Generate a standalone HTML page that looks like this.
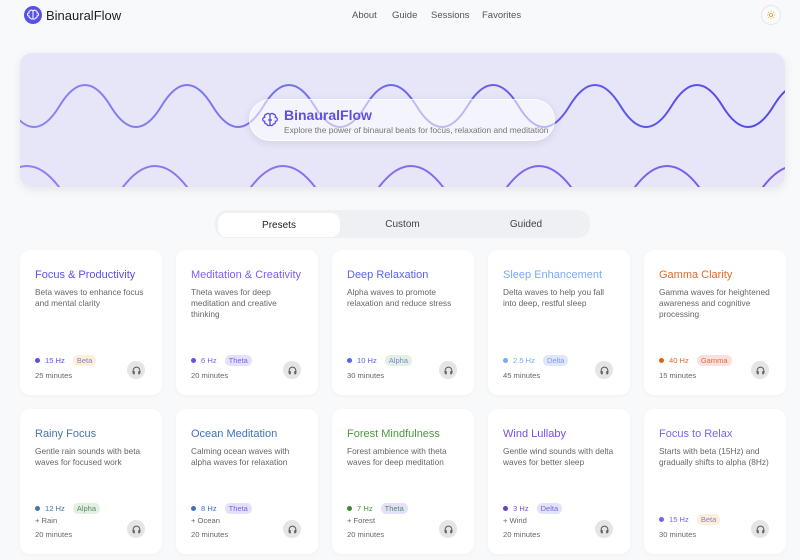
<!DOCTYPE html>
<html><head><meta charset="utf-8"><style>
*{box-sizing:border-box;margin:0;padding:0}
body{width:800px;height:560px;overflow:hidden;background:#f8f9fb;font-family:"Liberation Sans",sans-serif;position:relative;color:#333}
.abs{position:absolute}
.nav a{position:absolute;top:10px;font-size:9.5px;color:#555}
.hero{left:20px;top:53px;width:765px;height:134px;border-radius:12px;background:#e6e6f8;overflow:hidden;box-shadow:0 3px 10px rgba(0,0,0,.08)}
.pill{left:249px;top:99px;width:306px;height:42px;border-radius:21px;background:rgba(255,255,255,.55);box-shadow:0 2px 8px rgba(80,80,150,.15);border:1px solid rgba(255,255,255,.7)}
.tabs{left:215px;top:210px;width:375px;height:28px;border-radius:12px;background:#eef0f4}
.tab{position:absolute;top:0;height:28px;line-height:30px;font-size:10px;color:#444;text-align:center}
.card{position:absolute;width:142px;height:145px;background:#fff;border-radius:10px;box-shadow:0 1px 4px rgba(0,0,0,.04)}
.card h3{position:absolute;left:15px;top:19px;font-size:11px;font-weight:normal;white-space:nowrap}
.card p{position:absolute;left:15px;top:37px;width:114px;font-size:8.3px;line-height:11px;color:#666}
.hz{position:absolute;left:15px;font-size:7.6px;display:flex;align-items:center;white-space:nowrap}
.hz i{width:5px;height:5px;border-radius:50%;display:inline-block;margin-right:5px}
.tag{margin-left:8px;padding:1px 4px;border-radius:5px;font-size:7.5px}
.ex,.min{position:absolute;left:15px;font-size:7.6px;color:#666}
.hp{position:absolute;right:17px;width:18px;height:18px;border-radius:50%;background:#e5e5e5;display:flex;align-items:center;justify-content:center}
</style></head><body>
<div class="abs" style="left:24px;top:6px;width:18px;height:18px;border-radius:50%;background:#5b4fe9;display:flex;align-items:center;justify-content:center">
<svg width="12" height="12" viewBox="0 0 24 24" fill="none" stroke="#fff" stroke-width="2"><path d="M12 5a3 3 0 0 0-5.5-1.5A3 3 0 0 0 4 8a3 3 0 0 0 0 6 3 3 0 0 0 3 4 3 3 0 0 0 5 1.5V5z"/><path d="M12 5a3 3 0 0 1 5.5-1.5A3 3 0 0 1 20 8a3 3 0 0 1 0 6 3 3 0 0 1-3 4 3 3 0 0 1-5 1.5"/></svg></div>
<div class="abs" style="left:46px;top:8px;font-size:13px;color:#222">BinauralFlow</div>
<div class="nav"><a style="left:352px">About</a><a style="left:392px">Guide</a><a style="left:431px">Sessions</a><a style="left:482px">Favorites</a></div>
<div class="abs" style="left:761px;top:5px;width:20px;height:20px;border-radius:50%;border:1px solid #e6e6ec;background:#fafafa;display:flex;align-items:center;justify-content:center">
<svg width="10" height="10" viewBox="0 0 24 24" fill="none" stroke="#e0a53a" stroke-width="2.2"><circle cx="12" cy="12" r="4"/><path d="M12 2v2M12 20v2M2 12h2M20 12h2M4.9 4.9l1.4 1.4M17.7 17.7l1.4 1.4M4.9 19.1l1.4-1.4M17.7 6.3l1.4-1.4"/></svg></div>
<div class="abs hero">
<svg width="765" height="134" viewBox="20 53 765 134">
<defs><linearGradient id="g1" x1="0" x2="1"><stop offset="0" stop-color="#8e8af0"/><stop offset="1" stop-color="#4b43e6"/></linearGradient>
<linearGradient id="g2" x1="0" x2="1"><stop offset="0" stop-color="#9b86ef"/><stop offset="1" stop-color="#7556e6"/></linearGradient></defs>
<path fill="none" stroke="url(#g1)" stroke-width="2" d="M -42.5 106 Q -17 64 8.5 106 T 59.5 106 T 110.5 106 T 161.5 106 T 212.5 106 T 263.5 106 T 314.5 106 T 365.5 106 T 416.5 106 T 467.5 106 T 518.5 106 T 569.5 106 T 620.5 106 T 671.5 106 T 722.5 106 T 773.5 106 T 824.5 106 T 875.5 106"/>
<path fill="none" stroke="url(#g2)" stroke-width="2" d="M -133 187 Q -101 145 -69 187 T -5 187 T 59 187 T 123 187 T 187 187 T 251 187 T 315 187 T 379 187 T 443 187 T 507 187 T 571 187 T 635 187 T 699 187 T 763 187 T 827 187 T 891 187"/>
</svg></div>
<div class="abs pill"></div>
<svg class="abs" style="left:262px;top:112px" width="16" height="16" viewBox="0 0 24 24" fill="none" stroke="#5b4fe9" stroke-width="2"><path d="M12 5a3 3 0 0 0-5.5-1.5A3 3 0 0 0 4 8a3 3 0 0 0 0 6 3 3 0 0 0 3 4 3 3 0 0 0 5 1.5V5z"/><path d="M12 5a3 3 0 0 1 5.5-1.5A3 3 0 0 1 20 8a3 3 0 0 1 0 6 3 3 0 0 1-3 4 3 3 0 0 1-5 1.5"/><path d="M9 12h6"/></svg>
<div class="abs" style="left:284px;top:107px;font-size:14px;font-weight:bold;color:#5b4fe9">BinauralFlow</div>
<div class="abs" style="left:284px;top:125px;font-size:8.4px;color:#777;white-space:nowrap">Explore the power of binaural beats for focus, relaxation and meditation</div>
<div class="abs tabs"><div class="tab" style="left:3px;top:3px;height:24px;line-height:26px;width:122px;background:#fff;border-radius:9px;color:#222">Presets</div><div class="tab" style="left:125px;width:125px">Custom</div><div class="tab" style="left:250px;width:122px">Guided</div></div>

<div class="card" style="left:20px;top:250px"><h3 style="color:#5b4fe9">Focus &amp; Productivity</h3><p>Beta waves to enhance focus and mental clarity</p>
<div class="hz" style="top:105px;color:#5b4fe9"><i style="background:#5b4fe9"></i>15 Hz<span class="tag" style="background:#fbefd6;color:#8a7cd8">Beta</span></div><div class="min" style="top:121px">25 minutes</div><div class="hp" style="top:111px"><svg width="9" height="9" viewBox="0 0 24 24" fill="none" stroke="#555" stroke-width="2.5"><path d="M3 18v-6a9 9 0 0 1 18 0v6"/><path d="M21 19a2 2 0 0 1-2 2h-1v-6h3zM3 19a2 2 0 0 0 2 2h1v-6H3z"/></svg></div></div>
<div class="card" style="left:176px;top:250px"><h3 style="color:#7b5ff0">Meditation &amp; Creativity</h3><p>Theta waves for deep meditation and creative thinking</p>
<div class="hz" style="top:105px;color:#7b5ff0"><i style="background:#6a4fe6"></i>6 Hz<span class="tag" style="background:#e3e1fb;color:#7b5ff0">Theta</span></div><div class="min" style="top:121px">20 minutes</div><div class="hp" style="top:111px"><svg width="9" height="9" viewBox="0 0 24 24" fill="none" stroke="#555" stroke-width="2.5"><path d="M3 18v-6a9 9 0 0 1 18 0v6"/><path d="M21 19a2 2 0 0 1-2 2h-1v-6h3zM3 19a2 2 0 0 0 2 2h1v-6H3z"/></svg></div></div>
<div class="card" style="left:332px;top:250px"><h3 style="color:#5a62f0">Deep Relaxation</h3><p>Alpha waves to promote relaxation and reduce stress</p>
<div class="hz" style="top:105px;color:#5a62f0"><i style="background:#5a62f0"></i>10 Hz<span class="tag" style="background:#e3f1e3;color:#7a86d8">Alpha</span></div><div class="min" style="top:121px">30 minutes</div><div class="hp" style="top:111px"><svg width="9" height="9" viewBox="0 0 24 24" fill="none" stroke="#555" stroke-width="2.5"><path d="M3 18v-6a9 9 0 0 1 18 0v6"/><path d="M21 19a2 2 0 0 1-2 2h-1v-6h3zM3 19a2 2 0 0 0 2 2h1v-6H3z"/></svg></div></div>
<div class="card" style="left:488px;top:250px"><h3 style="color:#78aaf5">Sleep Enhancement</h3><p>Delta waves to help you fall into deep, restful sleep</p>
<div class="hz" style="top:105px;color:#78aaf5"><i style="background:#78aaf5"></i>2.5 Hz<span class="tag" style="background:#e1e7fb;color:#7a9be8">Delta</span></div><div class="min" style="top:121px">45 minutes</div><div class="hp" style="top:111px"><svg width="9" height="9" viewBox="0 0 24 24" fill="none" stroke="#555" stroke-width="2.5"><path d="M3 18v-6a9 9 0 0 1 18 0v6"/><path d="M21 19a2 2 0 0 1-2 2h-1v-6h3zM3 19a2 2 0 0 0 2 2h1v-6H3z"/></svg></div></div>
<div class="card" style="left:644px;top:250px"><h3 style="color:#e06a2c">Gamma Clarity</h3><p>Gamma waves for heightened awareness and cognitive processing</p>
<div class="hz" style="top:105px;color:#e06a2c"><i style="background:#e0601c"></i>40 Hz<span class="tag" style="background:#fbe1dc;color:#e06a4c">Gamma</span></div><div class="min" style="top:121px">15 minutes</div><div class="hp" style="top:111px"><svg width="9" height="9" viewBox="0 0 24 24" fill="none" stroke="#555" stroke-width="2.5"><path d="M3 18v-6a9 9 0 0 1 18 0v6"/><path d="M21 19a2 2 0 0 1-2 2h-1v-6h3zM3 19a2 2 0 0 0 2 2h1v-6H3z"/></svg></div></div>

<div class="card" style="left:20px;top:409px"><h3 style="color:#4a74a8">Rainy Focus</h3><p>Gentle rain sounds with beta waves for focused work</p>
<div class="hz" style="top:94px;color:#4a74a8"><i style="background:#4a74a8"></i>12 Hz<span class="tag" style="background:#e1f0e1;color:#5a8a6a">Alpha</span></div><div class="ex" style="top:107px">+ Rain</div><div class="min" style="top:121px">20 minutes</div><div class="hp" style="top:111px"><svg width="9" height="9" viewBox="0 0 24 24" fill="none" stroke="#555" stroke-width="2.5"><path d="M3 18v-6a9 9 0 0 1 18 0v6"/><path d="M21 19a2 2 0 0 1-2 2h-1v-6h3zM3 19a2 2 0 0 0 2 2h1v-6H3z"/></svg></div></div>
<div class="card" style="left:176px;top:409px"><h3 style="color:#3d72c0">Ocean Meditation</h3><p>Calming ocean waves with alpha waves for relaxation</p>
<div class="hz" style="top:94px;color:#3d72c0"><i style="background:#3d72c0"></i>8 Hz<span class="tag" style="background:#e3e1fb;color:#7b5ff0">Theta</span></div><div class="ex" style="top:107px">+ Ocean</div><div class="min" style="top:121px">20 minutes</div><div class="hp" style="top:111px"><svg width="9" height="9" viewBox="0 0 24 24" fill="none" stroke="#555" stroke-width="2.5"><path d="M3 18v-6a9 9 0 0 1 18 0v6"/><path d="M21 19a2 2 0 0 1-2 2h-1v-6h3zM3 19a2 2 0 0 0 2 2h1v-6H3z"/></svg></div></div>
<div class="card" style="left:332px;top:409px"><h3 style="color:#4a9a3c">Forest Mindfulness</h3><p>Forest ambience with theta waves for deep meditation</p>
<div class="hz" style="top:94px;color:#4a9a3c"><i style="background:#3d8a2c"></i>7 Hz<span class="tag" style="background:#e3e1fb;color:#5a8a6a">Theta</span></div><div class="ex" style="top:107px">+ Forest</div><div class="min" style="top:121px">20 minutes</div><div class="hp" style="top:111px"><svg width="9" height="9" viewBox="0 0 24 24" fill="none" stroke="#555" stroke-width="2.5"><path d="M3 18v-6a9 9 0 0 1 18 0v6"/><path d="M21 19a2 2 0 0 1-2 2h-1v-6h3zM3 19a2 2 0 0 0 2 2h1v-6H3z"/></svg></div></div>
<div class="card" style="left:488px;top:409px"><h3 style="color:#7a4fd8">Wind Lullaby</h3><p>Gentle wind sounds with delta waves for better sleep</p>
<div class="hz" style="top:94px;color:#7a4fd8"><i style="background:#6a3fc8"></i>3 Hz<span class="tag" style="background:#e1e3fb;color:#7a5fe0">Delta</span></div><div class="ex" style="top:107px">+ Wind</div><div class="min" style="top:121px">20 minutes</div><div class="hp" style="top:111px"><svg width="9" height="9" viewBox="0 0 24 24" fill="none" stroke="#555" stroke-width="2.5"><path d="M3 18v-6a9 9 0 0 1 18 0v6"/><path d="M21 19a2 2 0 0 1-2 2h-1v-6h3zM3 19a2 2 0 0 0 2 2h1v-6H3z"/></svg></div></div>
<div class="card" style="left:644px;top:409px"><h3 style="color:#7a62f0">Focus to Relax</h3><p>Starts with beta (15Hz) and gradually shifts to alpha (8Hz)</p>
<div class="hz" style="top:105px;color:#7a62f0"><i style="background:#7a62f0"></i>15 Hz<span class="tag" style="background:#fbefd6;color:#8a7cd8">Beta</span></div><div class="min" style="top:121px">30 minutes</div><div class="hp" style="top:111px"><svg width="9" height="9" viewBox="0 0 24 24" fill="none" stroke="#555" stroke-width="2.5"><path d="M3 18v-6a9 9 0 0 1 18 0v6"/><path d="M21 19a2 2 0 0 1-2 2h-1v-6h3zM3 19a2 2 0 0 0 2 2h1v-6H3z"/></svg></div></div>
</body></html>
